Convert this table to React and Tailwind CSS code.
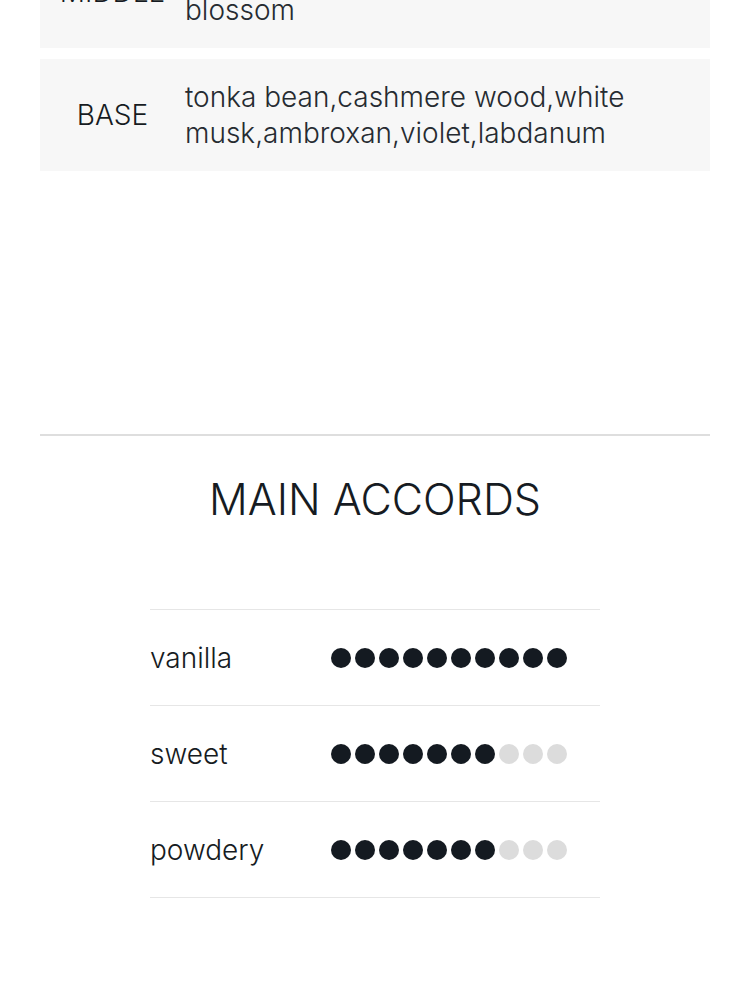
import React from 'react';

const notes = [
  { label: 'MIDDLE', text: 'heliotrope,jasmine,orange blossom' },
  { label: 'BASE', text: 'tonka bean,cashmere wood,white musk,ambroxan,violet,labdanum' },
];

const accords = [
  { name: 'vanilla', level: 10 },
  { name: 'sweet', level: 7 },
  { name: 'powdery', level: 7 },
];

const Dots = ({ level }) => (
  <div className="flex gap-1">
    {Array.from({ length: 10 }).map((_, i) => (
      <span
        key={i}
        className={`block w-5 h-5 rounded-full ${i < level ? 'bg-[#141a21]' : 'bg-[#dcdcdc]'}`}
      />
    ))}
  </div>
);

export default function App() {
  return (
    <div className="bg-white text-[#161b22] font-['Inter',sans-serif] font-light overflow-hidden h-[1000px]">
      <div className="px-10 -mt-[64px]">
        {/* Notes pyramid */}
        <div className="flex flex-col gap-[11px]">
          {notes.map((n) => (
            <div key={n.label} className="flex items-center bg-[#f7f7f7] h-[112px]">
              <div className="w-[145px] shrink-0 text-center text-[28px] leading-9">{n.label}</div>
              <div className="pr-[70px] text-[28px] leading-9 text-[#262b31]">{n.text}</div>
            </div>
          ))}
        </div>

        <div className="h-[263px]" />
        <hr className="border-0 h-[2px] bg-[#dedede]" />

        {/* Main accords */}
        <h2 className="mt-[37px] text-center text-[43px] leading-[52px]">MAIN ACCORDS</h2>

        <div className="mt-[84px] w-[450px] mx-auto border-t border-[#e6e6e6]">
          {accords.map((a) => (
            <div key={a.name} className="flex items-center h-[96px] border-b border-[#e6e6e6]">
              <div className="w-[181px] text-[28px] leading-9">{a.name}</div>
              <Dots level={a.level} />
            </div>
          ))}
        </div>
      </div>
    </div>
  );
}
